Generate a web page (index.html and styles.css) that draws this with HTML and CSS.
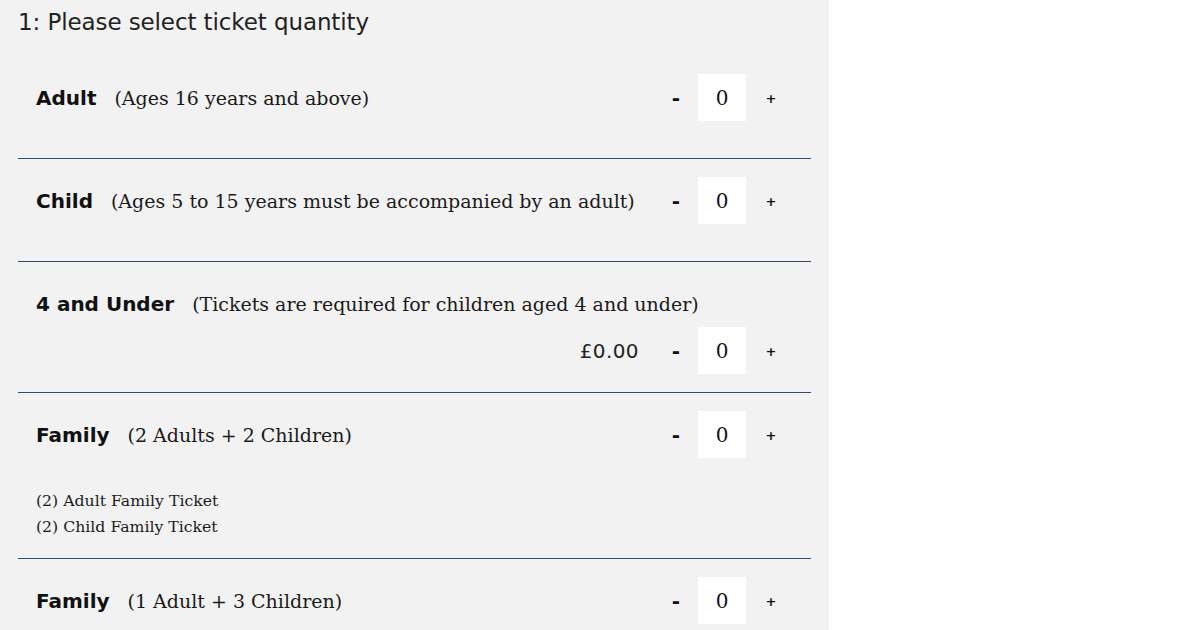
FILE: index.html
```html
<!DOCTYPE html>
<html lang="en">
<head>
<meta charset="utf-8">
<title>Tickets</title>
<link rel="stylesheet" href="styles.css">
</head>
<body>
<div class="panel">
  <h2 class="title">1: Please select ticket quantity</h2>

  <div class="row">
    <div class="line">
      <div class="label"><span class="name">Adult</span><span class="desc">(Ages 16 years and above)</span></div>
      <div class="counter"><button class="btn minus">-</button><span class="qty">0</span><button class="btn plus">+</button></div>
    </div>
    <div class="spacer"></div>
  </div>

  <div class="row">
    <div class="line">
      <div class="label"><span class="name">Child</span><span class="desc">(Ages 5 to 15 years must be accompanied by an adult)</span></div>
      <div class="counter"><button class="btn minus">-</button><span class="qty">0</span><button class="btn plus">+</button></div>
    </div>
    <div class="spacer"></div>
  </div>

  <div class="row">
    <div class="line">
      <div class="label"><span class="name">4 and Under</span><span class="desc">(Tickets are required for children aged 4 and under)</span></div>
    </div>
    <div class="line end">
      <span class="price">£0.00</span>
      <div class="counter"><button class="btn minus">-</button><span class="qty">0</span><button class="btn plus">+</button></div>
    </div>
  </div>

  <div class="row">
    <div class="line">
      <div class="label"><span class="name">Family</span><span class="desc">(2 Adults + 2 Children)</span></div>
      <div class="counter"><button class="btn minus">-</button><span class="qty">0</span><button class="btn plus">+</button></div>
    </div>
    <div class="includes">
      <div>(2) Adult Family Ticket</div>
      <div>(2) Child Family Ticket</div>
    </div>
  </div>

  <div class="row">
    <div class="line">
      <div class="label"><span class="name">Family</span><span class="desc">(1 Adult + 3 Children)</span></div>
      <div class="counter"><button class="btn minus">-</button><span class="qty">0</span><button class="btn plus">+</button></div>
    </div>
  </div>
</div>
</body>
</html>
```

FILE: styles.css
```css
html, body {
  margin: 0;
  padding: 0;
  background: #ffffff;
}

body {
  width: 1200px;
  height: 630px;
  overflow: hidden;
}

.panel {
  width: 829px;
  min-height: 630px;
  box-sizing: border-box;
  background: #f2f2f2;
  padding: 0 18px;
}

.title {
  margin: 0;
  padding-top: 7px;
  height: 56px;
  box-sizing: border-box;
  line-height: 30px;
  font-family: "DejaVu Sans", sans-serif;
  font-weight: normal;
  font-size: 23px;
  color: #222;
  letter-spacing: -0.1px;
}

.row {
  padding: 18px 15px 18px 18px;
  border-bottom: 1px solid #2f4a6a;
}

.row:last-child {
  border-bottom: none;
}

.line {
  display: flex;
  align-items: center;
  min-height: 47px;
}

.line.end {
  justify-content: flex-end;
}

.label {
  flex: 1;
  display: flex;
  align-items: baseline;
  white-space: nowrap;
}

.name {
  font-family: "DejaVu Sans", sans-serif;
  font-weight: bold;
  font-size: 20px;
  color: #111;
  margin-right: 18px;
}

.desc {
  font-family: "DejaVu Serif", serif;
  font-size: 19px;
  color: #1a1a1a;
}

.spacer {
  height: 19px;
}

.counter {
  display: flex;
  align-items: center;
}

.btn {
  border: none;
  background: transparent;
  padding: 0;
  margin: 0;
  height: 47px;
  font-family: "DejaVu Sans", sans-serif;
  font-weight: bold;
  color: #111;
  cursor: pointer;
}

.minus {
  width: 44px;
  font-size: 20px;
  padding-top: 0;
}

.plus {
  width: 50px;
  font-size: 13px;
  padding-top: 1px;
}

.qty {
  width: 48px;
  height: 47px;
  background: #ffffff;
  display: flex;
  align-items: center;
  justify-content: center;
  font-family: "DejaVu Serif", serif;
  font-size: 20px;
  color: #111;
}

.price {
  font-family: "DejaVu Sans", sans-serif;
  font-size: 20px;
  color: #222;
  margin-right: 15px;
  letter-spacing: 0.4px;
}

.includes {
  margin-top: 30px;
  font-family: "DejaVu Serif", serif;
  font-size: 15.7px;
  line-height: 26px;
  color: #1a1a1a;
}
```
